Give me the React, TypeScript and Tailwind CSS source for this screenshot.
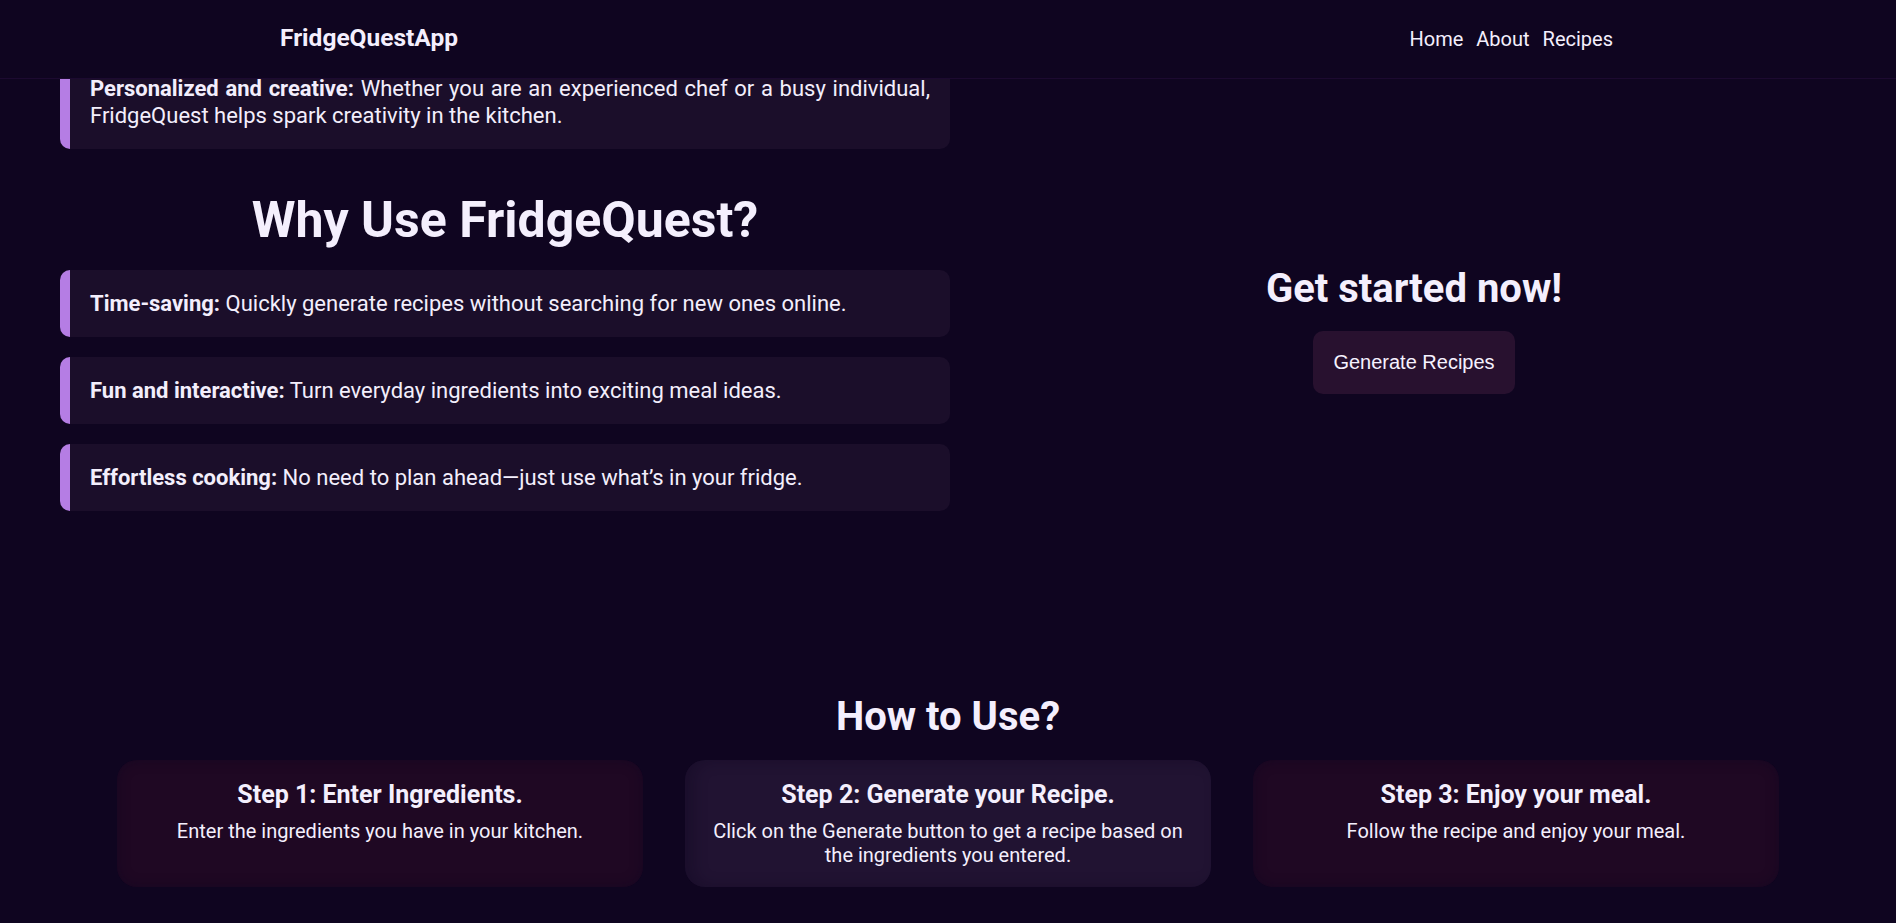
import React from "react";

const reasons = [
  { label: "Time-saving:", text: "Quickly generate recipes without searching for new ones online." },
  { label: "Fun and interactive:", text: "Turn everyday ingredients into exciting meal ideas." },
  { label: "Effortless cooking:", text: "No need to plan ahead\u2014just use what\u2019s in your fridge." },
];

const steps = [
  {
    title: "Step 1: Enter Ingredients.",
    text: "Enter the ingredients you have in your kitchen.",
    active: false,
  },
  {
    title: "Step 2: Generate your Recipe.",
    text: "Click on the Generate button to get a recipe based on the ingredients you entered.",
    active: true,
  },
  {
    title: "Step 3: Enjoy your meal.",
    text: "Follow the recipe and enjoy your meal.",
    active: false,
  },
];

function InfoCard({ label, text }: { label: string; text: string }) {
  return (
    <div className="rounded-[10px] border-l-[10px] border-[#b57de4] bg-[#1b0e2a] py-5 pl-5 pr-5 text-justify text-[22px] leading-[27px] text-[#f3eefc]">
      <span className="font-bold">{label}</span> {text}
    </div>
  );
}

export default function App() {
  return (
    <div className="min-h-screen bg-[#0f0520] font-['Roboto',sans-serif] text-[#f4effd]">
      {/* header stays on top while the page scrolls */}
      <header className="fixed inset-x-0 top-0 z-10 h-[79px] border-b border-[#1c0a30] bg-[#0f0520]">
        <div className="flex h-full items-center justify-between pb-px pl-[280px] pr-[283px]">
          <div className="text-[24.5px] font-bold">FridgeQuestApp</div>
          <nav className="flex gap-[13px] text-[20px]">
            <a href="#">Home</a>
            <a href="#">About</a>
            <a href="#">Recipes</a>
          </nav>
        </div>
      </header>

      <main className="pt-[55px]">
        <section className="flex px-[60px]">
          <div className="w-[890px]">
            <InfoCard
              label="Personalized and creative:"
              text="Whether you are an experienced chef or a busy individual, FridgeQuest helps spark creativity in the kitchen."
            />
            <h2 className="mt-[41px] mb-[20px] text-center text-[50px] font-bold leading-[60px]">
              Why Use FridgeQuest?
            </h2>
            <div className="flex flex-col gap-5">
              {reasons.map((r) => (
                <InfoCard key={r.label} label={r.label} text={r.text} />
              ))}
            </div>
          </div>

          <div className="ml-[42px] flex flex-1 flex-col items-center pt-[210px]">
            <h2 className="text-[40px] font-bold leading-[48px]">Get started now!</h2>
            <button className="mt-[18px] rounded-[10px] bg-[#28112f] px-5 py-5 font-['Liberation_Sans',Arial,sans-serif] text-[20px] leading-[23px] text-[#f6f2ff]">
              Generate Recipes
            </button>
          </div>
        </section>

        <section className="mt-[182px] px-[117px]">
          <h2 className="mb-[19px] text-center text-[40px] font-bold leading-[48px]">How to Use?</h2>
          <div className="grid grid-cols-3 gap-[42px]">
            {steps.map((s) => (
              <div
                key={s.title}
                className={
                  s.active
                    ? "rounded-[20px] bg-[#211332] px-5 pt-5 pb-5 text-center shadow-[inset_8px_0_14px_rgba(15,5,32,0.35)]"
                    : "rounded-[20px] bg-[#1f0823] px-5 pt-5 pb-5 text-center shadow-[inset_0_0_12px_rgba(15,5,32,0.55)]"
                }
              >
                <h3 className="mb-[10px] text-[25px] font-bold leading-[29px]">{s.title}</h3>
                <p className="text-[20px] leading-6">{s.text}</p>
              </div>
            ))}
          </div>
        </section>
      </main>
    </div>
  );
}
